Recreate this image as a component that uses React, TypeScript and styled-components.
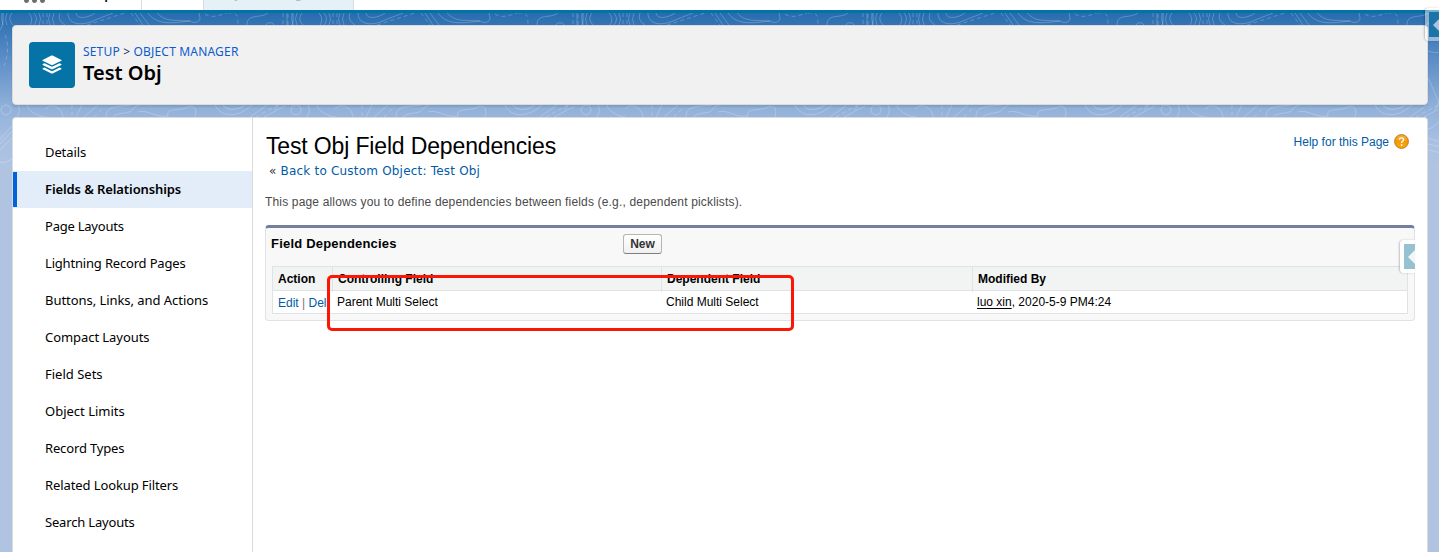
import React from "react";
import styled, { createGlobalStyle } from "styled-components";

const GlobalStyle = createGlobalStyle`
  *, *::before, *::after { box-sizing: border-box; }
  body { margin: 0; }
`;

const sans = '"Liberation Sans", Helvetica, Arial, sans-serif';
const brand = '"Noto Sans", "Open Sans", sans-serif';

const Page = styled.div`
  position: relative;
  width: 1439px;
  height: 552px;
  overflow: hidden;
  display: flex;
  flex-direction: column;
  background: #b0c4e2;
  font-family: ${sans};
  font-size: 12px;
  color: #000;
`;

const TopBar = styled.header`
  flex: none;
  display: flex;
  height: 13px;
  overflow: hidden;
  background: #fff;
  border-bottom: 3px solid #0073a8;
`;

const Launcher = styled.div`
  display: flex;
  gap: 3px;
  width: 56px;
  padding-left: 24px;
  margin-top: -3px;
`;

const Dot = styled.i`
  width: 5px;
  height: 6px;
  border-radius: 50%;
  background: #706e6b;
`;

const AppName = styled.div`
  width: 86px;
  height: 40px;
  margin-top: -21px;
  padding-left: 11px;
  border-right: 1px solid #dddbda;
  font: 18px/24px ${brand};
  letter-spacing: -0.2px;
`;

const TopTab = styled.div<{ $width: number; $active?: boolean }>`
  width: ${(p) => p.$width}px;
  height: 32px;
  margin-top: -17px;
  padding-left: 13px;
  border-right: 1px solid #d5dde2;
  background: ${(p) => (p.$active ? "#e5f0f7" : "#fff")};
  color: #b3bdc4;
  font: 13px/20px ${brand};
  white-space: nowrap;
`;

const Backdrop = styled.div`
  position: relative;
  flex: 1;
  min-height: 0;
  display: flex;
  flex-direction: column;
  gap: 12px;
  padding: 12px 11px 0 12px;
  background: linear-gradient(
    #286cae 0,
    #3b79b9 18px,
    #6794cb 55px,
    #91b1da 95px,
    #a9c0e2 130px,
    #b0c4e2 155px
  );
`;

const Topography = styled.svg`
  position: absolute;
  inset: 0;
  width: 1439px;
  height: 155px;
  fill: none;
`;

const HeaderCard = styled.section`
  position: relative;
  flex: none;
  display: flex;
  height: 80px;
  padding: 16px;
  background: #f1f1f1;
  border: 1px solid #dddbda;
  border-radius: 4px;
  box-shadow: 0 2px 2px rgba(0, 0, 0, 0.1);
`;

const ObjectIcon = styled.div`
  display: grid;
  place-items: center;
  width: 46px;
  height: 46px;
  border-radius: 4px;
  background: #0573a5;
`;

const HeaderText = styled.div`
  padding: 1px 0 0 8px;
  font-family: ${brand};
`;

const Crumbs = styled.div`
  font-size: 12px;
  line-height: 17px;
  letter-spacing: 0.18px;
  color: #16325c;
  a { color: #0b5cce; }
`;

const ObjectName = styled.h1`
  margin: 0;
  font-size: 20px;
  line-height: 26px;
  font-weight: 600;
`;

const MainCard = styled.section`
  position: relative;
  flex: 1;
  display: flex;
  background: #fff;
  border: 1px solid #dddbda;
  border-bottom: 0;
  border-radius: 4px 4px 0 0;
`;

const Nav = styled.nav`
  width: 240px;
  padding-top: 16px;
  border-right: 1px solid #dddbda;
  font-family: ${brand};
`;

const NavItem = styled.a<{ $active?: boolean; $track: number }>`
  display: flex;
  align-items: center;
  position: relative;
  height: 37px;
  padding: 0 0 2px 32px;
  font-size: 13px;
  font-weight: ${(p) => (p.$active ? 600 : 400)};
  letter-spacing: ${(p) => p.$track}px;
  background: ${(p) => (p.$active ? "#e3edf9" : "transparent")};
  &::before {
    content: "";
    display: ${(p) => (p.$active ? "block" : "none")};
    position: absolute;
    left: 0;
    top: 1px;
    bottom: 1px;
    width: 4px;
    background: #0062dd;
  }
`;

const Content = styled.main`
  flex: 1;
  min-width: 0;
  padding: 14px 12px 0;
`;

const TitleRow = styled.div`
  display: flex;
  justify-content: space-between;
  height: 28px;
`;

const Title = styled.h2`
  margin: 0 0 0 1px;
  font-size: 23px;
  line-height: 28px;
  font-weight: 400;
  letter-spacing: -0.15px;
`;

const Help = styled.a`
  display: flex;
  align-items: center;
  gap: 5px;
  height: 18px;
  margin-right: 6px;
  color: #015ba7;
  > span { padding-top: 2px; }
`;

const BackLink = styled.div`
  height: 21px;
  padding: 1px 0 0 4px;
  font: 12px/21px "DejaVu Sans", Verdana, sans-serif;
  letter-spacing: 0.2px;
  color: #333;
  a { color: #015ba7; }
`;

const Intro = styled.p`
  margin: 13px 0 15px;
  line-height: 16px;
  letter-spacing: 0.165px;
  color: #4a4a4a;
`;

const Block = styled.section`
  height: 96px;
  padding: 0 6px;
  background: #f8f8f8;
  border: 1px solid #e0e3e5;
  border-top: 3px solid #747e9d;
  border-radius: 4px;
`;

const BlockHead = styled.div`
  display: flex;
  align-items: center;
  height: 38px;
  padding-bottom: 6px;
`;

const BlockTitle = styled.h3`
  width: 352px;
  margin: 0 0 0 -1px;
  padding-bottom: 1px;
  font-size: 13px;
  letter-spacing: 0.2px;
`;

const NewButton = styled.button`
  width: 39px;
  height: 20px;
  padding: 0;
  border: 1px solid #b5b5b5;
  border-bottom-color: #7f7f7f;
  border-radius: 3px;
  background: linear-gradient(#fff, #f0f0f0);
  color: #333;
  font: bold 12px ${sans};
`;

const Table = styled.div`
  border: 1px solid #e0e3e5;
  background: #fff;
`;

const Row = styled.div<{ $head?: boolean }>`
  display: grid;
  grid-template-columns: 59px 329px 311px 1fr;
  height: ${(p) => (p.$head ? 24 : 22)}px;
  line-height: ${(p) => (p.$head ? 25 : 23)}px;
  font-weight: ${(p) => (p.$head ? 700 : 400)};
  background: ${(p) => (p.$head ? "#f2f3f3" : "#fff")};
  border-bottom: ${(p) => (p.$head ? "1px solid #e0e3e5" : "0")};
`;

const Cell = styled.div<{ $rule?: boolean }>`
  padding-left: 5px;
  border-left: ${(p) => (p.$rule ? "1px solid #e0e3e5" : "0")};
  white-space: nowrap;
`;

const Actions = styled(Cell)`
  line-height: 25px;
  color: #777;
  a { color: #015ba7; }
`;

const User = styled.a`
  text-decoration: underline;
  text-underline-offset: 2px;
`;

const Highlight = styled.div`
  position: absolute;
  left: 327px;
  top: 275px;
  width: 467px;
  height: 56px;
  border: 3px solid #fb1605;
  border-radius: 5px;
`;

const EdgeTab = styled.div<{ $x: number; $y: number; $w: number; $fill: string; $rim: string }>`
  position: absolute;
  left: ${(p) => p.$x}px;
  top: ${(p) => p.$y}px;
  width: ${(p) => p.$w}px;
  height: 33px;
  padding: 4px 0 4px 4px;
  overflow: hidden;
  border-radius: 4px 0 0 4px;
  background: ${(p) => p.$rim};
  box-shadow: -1px 0 2px rgba(0, 0, 0, 0.22);
  > div {
    display: flex;
    align-items: center;
    justify-content: flex-end;
    height: 25px;
    background: ${(p) => p.$fill};
  }
`;

const navItems: { label: string; active?: boolean; track: number }[] = [
  { label: "Details", track: -0.1 },
  { label: "Fields & Relationships", active: true, track: -0.1 },
  { label: "Page Layouts", track: -0.23 },
  { label: "Lightning Record Pages", track: -0.18 },
  { label: "Buttons, Links, and Actions", track: -0.05 },
  { label: "Compact Layouts", track: -0.06 },
  { label: "Field Sets", track: 0 },
  { label: "Object Limits", track: 0 },
  { label: "Record Types", track: -0.15 },
  { label: "Related Lookup Filters", track: -0.1 },
  { label: "Search Layouts", track: -0.18 },
];

function Contours() {
  return (
    <Topography viewBox="0 13 1439 155">
      <defs>
        <pattern id="topo" x="190" y="0" width="290" height="168" patternUnits="userSpaceOnUse">
          <g stroke="#fff" strokeOpacity="0.22" strokeWidth="1">
            <path d="M0 21C5 24 10 22 10 18L9 13M57 25C57 13 70 19 78 13M76 25C77 22 83 22 84 25M97 13V25M102 13Q101 19 103 25M107 13Q104 19 107 25M112 13Q107 19 113 25" />
            <path d="M129 13Q134 19 130 25M134 13Q139 19 134 25M139 13Q142 19 139 25M150 13Q147 19 150 25M154 13Q151 19 154 25M160 13Q157 20 165 25M168 13C168 27 186 25 195 20L213 13M176 13C177 20 188 18 195 13" />
            <path d="M235 13L243 25M240 13L249 25M248 13C256 24 268 24 290 21M257 13C266 22 272 20 290 21" />
            <path strokeDasharray="4 3" d="M15 14C22 19 30 15 37 13M38 13C47 12 48 15 48 25M93 13V25M98 25V13M143 13V25M147 13V25M187 25L225 13M231 13L240 25" />
            <path d="M0 107C5 105 7 110 5 117M25 105C31 118 48 118 62 105M33 105C38 112 48 110 55 105M60 117L77 105M74 117L95 106M118 105Q121 111 117 117M127 105C127 110 138 117 146 117M145 109C152 102 162 108 163 117M176 117L182 105M184 117L198 105M206 117C206 106 215 107 232 105M213 117C217 112 230 114 232 110Q233 107 239 105M238 112C248 109 255 118 268 116C265 107 282 112 290 106" />
            <circle cx="106" cy="110" r="5" />
            <path strokeDasharray="4 3" d="M66 117L88 105M172 105V117M194 117L203 108M105 35C109 43 108 57 104 66" />
            <path d="M100 30Q104 25 103 13M78 51C85 54 90 51 95 54M78 78L88 100Q90 106 84 110M78 129C86 127 89 122 91 117M100 139L112 126M100 144L112 131M100 150L112 138M78 138L91 142M78 144L91 147M78 150L91 153M100 162Q104 164 112 159" />
          </g>
        </pattern>
      </defs>
      <rect y="13" width="1439" height="155" fill="url(#topo)" />
    </Topography>
  );
}

export default function App() {
  return (
    <Page>
      <GlobalStyle />
      <TopBar>
        <Launcher><Dot /><Dot /><Dot /></Launcher>
        <AppName>Setup</AppName>
        <TopTab $width={62}>Home</TopTab>
        <TopTab $width={150} $active>Object Manager</TopTab>
      </TopBar>
      <Backdrop>
        <Contours />
        <HeaderCard>
          <ObjectIcon>
            <svg width="20" height="20" viewBox="0 0 20 20" fill="#fff">
              <path d="M9.4.6Q10 .3 10.6.6L19.4 5Q20 5.4 19.4 5.8L10.6 10Q10 10.3 9.4 10L.6 5.8Q0 5.4.6 5Z" />
              <path d="M.8 9L2.4 8.2 9.4 11.6Q10 11.9 10.6 11.6L17.6 8.2 19.2 9Q20 9.5 19.2 10L10.6 14.2Q10 14.5 9.4 14.2L.8 10Q0 9.5.8 9Z" />
              <path d="M.8 13.2L2.4 12.4 9.4 15.9Q10 16.2 10.6 15.9L17.6 12.4 19.2 13.2Q20 13.7 19.2 14.2L10.6 18.4Q10 18.8 9.4 18.4L.8 14.2Q0 13.7.8 13.2Z" />
            </svg>
          </ObjectIcon>
          <HeaderText>
            <Crumbs><a>SETUP</a> &gt; <a>OBJECT MANAGER</a></Crumbs>
            <ObjectName>Test Obj</ObjectName>
          </HeaderText>
        </HeaderCard>
        <MainCard>
          <Nav>
            {navItems.map((n) => (
              <NavItem key={n.label} $active={n.active} $track={n.track}>{n.label}</NavItem>
            ))}
          </Nav>
          <Content>
            <TitleRow>
              <Title>Test Obj Field Dependencies</Title>
              <Help>
                <span>Help for this Page</span>
                <svg width="15" height="15" viewBox="0 0 15 15">
                  <defs>
                    <linearGradient id="amber" x1="0" y1="0" x2="0" y2="1">
                      <stop offset="0" stopColor="#f5b13a" />
                      <stop offset="0.5" stopColor="#f29a0c" />
                      <stop offset="1" stopColor="#ffab08" />
                    </linearGradient>
                  </defs>
                  <circle cx="7.5" cy="7.5" r="6.9" fill="url(#amber)" stroke="#b9730f" strokeWidth="0.9" />
                  <path d="M5.4 5.8C5.5 3.2 9.7 3.3 9.6 5.8C9.5 7.3 7.6 7.2 7.6 8.9" fill="none" stroke="#fff" strokeWidth="1.4" />
                  <circle cx="7.6" cy="11" r="0.9" fill="#fff" />
                </svg>
              </Help>
            </TitleRow>
            <BackLink>« <a>Back to Custom Object: Test Obj</a></BackLink>
            <Intro>This page allows you to define dependencies between fields (e.g., dependent picklists).</Intro>
            <Block>
              <BlockHead>
                <BlockTitle>Field Dependencies</BlockTitle>
                <NewButton>New</NewButton>
              </BlockHead>
              <Table>
                <Row $head>
                  <Cell>Action</Cell>
                  <Cell $rule>Controlling Field</Cell>
                  <Cell $rule>Dependent Field</Cell>
                  <Cell $rule>Modified By</Cell>
                </Row>
                <Row>
                  <Actions><a>Edit</a> | <a>Del</a></Actions>
                  <Cell>Parent Multi Select</Cell>
                  <Cell>Child Multi Select</Cell>
                  <Cell><User>luo xin</User>, 2020-5-9 PM4:24</Cell>
                </Row>
              </Table>
            </Block>
          </Content>
        </MainCard>
      </Backdrop>
      <Highlight />
      <EdgeTab $x={1400} $y={240} $w={15} $rim="rgba(255,255,255,.85)" $fill="#96c1d0">
        <div>
          <svg width="7" height="14" viewBox="0 0 7 14"><path d="M7 0V14L0 7Z" fill="#f3f6f7" /></svg>
        </div>
      </EdgeTab>
      <EdgeTab $x={1425} $y={8} $w={14} $rim="rgba(255,255,255,.45)" $fill="#1c73a7">
        <div>
          <svg width="6" height="12" viewBox="0 0 6 12"><path d="M6 0V12L0 6Z" fill="#a9c3e0" /></svg>
        </div>
      </EdgeTab>
    </Page>
  );
}
